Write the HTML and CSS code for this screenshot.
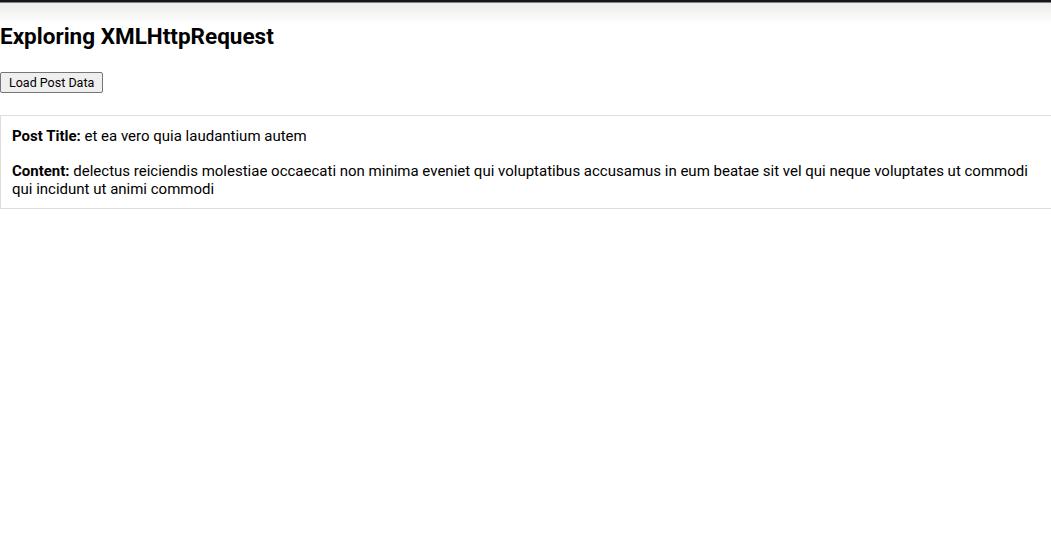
FILE: index.html
```html
<!DOCTYPE html>
<html>
<head>
<meta charset="utf-8">
<title>Exploring XMLHttpRequest</title>
<link rel="stylesheet" href="styles.css">
</head>
<body>
<h2 class="title">Exploring XMLHttpRequest</h2>
<button class="load-btn">Load Post Data</button>
<div class="post">
  <p class="post-line"><strong>Post Title:</strong> et ea vero quia laudantium autem</p>
  <p class="post-line"><strong>Content:</strong> delectus reiciendis molestiae occaecati non minima eveniet qui voluptatibus accusamus in eum beatae sit vel qui neque voluptates ut commodi qui incidunt ut animi commodi</p>
</div>
</body>
</html>
```
FILE: styles.css
```css
html, body {
  margin: 0;
  padding: 0;
}
body {
  font-family: Roboto, "Liberation Sans", sans-serif;
  color: #000;
  background: linear-gradient(#15151c 0, #15151c 2px, #ececec 3px, #fff 24px) no-repeat;
  background-size: 100% 24px;
  background-color: #fff;
  padding-top: 1px;
}
.title {
  font-size: 22.5px;
  font-weight: 700;
  margin: 22px 0 23px;
}
.load-btn {
  font-family: Roboto, "Liberation Sans", sans-serif;
  font-size: 12.5px;
  line-height: 15px;
  padding: 2px 8px 2px;
  border: 1px solid #767676;
  border-radius: 2px;
  background: #efefef;
  color: #000;
}
.post {
  margin-top: 22px;
  border: 1px solid #ddd;
  border-right: none;
  padding: 11px 11px 10px;
  font-size: 15px;
}
.post-line {
  margin: 0 0 17px;
  line-height: 18px;
}
.post-line:last-child {
  margin-bottom: 0;
}
```
